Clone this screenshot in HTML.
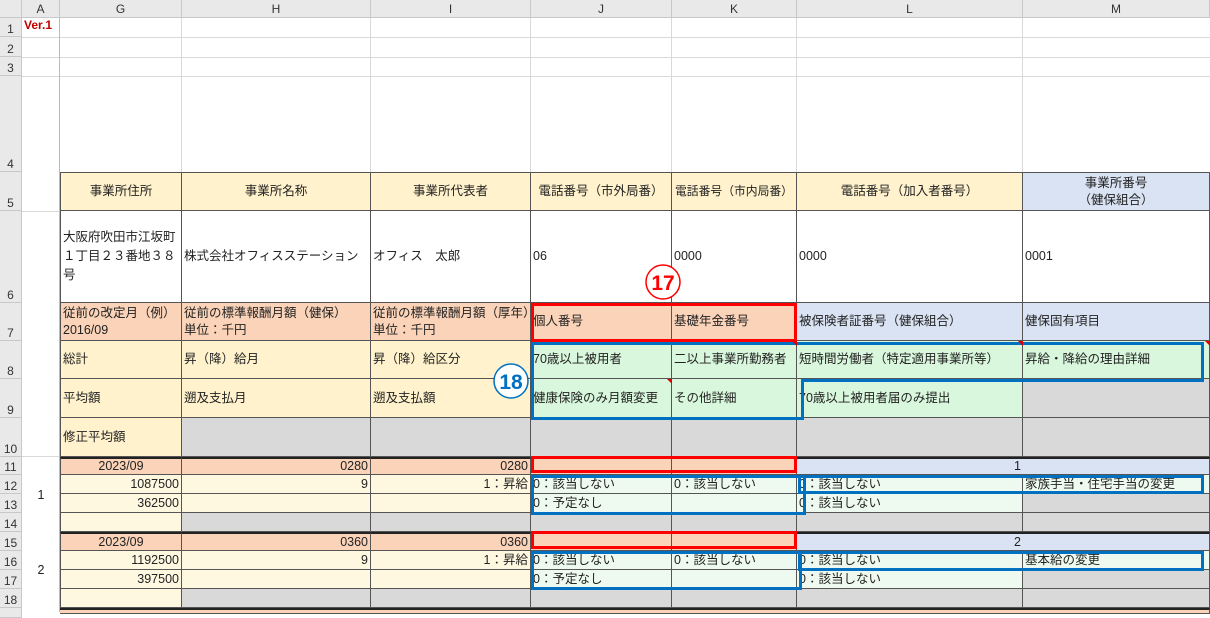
<!DOCTYPE html><html><head><meta charset="utf-8"><style>
body{margin:0;width:1210px;height:612px;overflow:hidden;background:#fff;font-family:"Liberation Sans","Noto Sans CJK JP",sans-serif;font-size:12.5px;color:#222;position:relative}
.c{position:absolute;box-sizing:border-box;border-right:1px solid #555;border-bottom:1px solid #555;display:flex;align-items:center;padding:0 2px;white-space:nowrap;overflow:hidden;line-height:17px}
.h{position:absolute;background:#e9e9e9;box-sizing:border-box;border-right:1px solid #c8c8c8;border-bottom:1px solid #c8c8c8;display:flex;justify-content:center;color:#333;font-size:12px}
.ce{justify-content:center;text-align:center}.r{justify-content:flex-end}
.Y{background:#fff2cc}.O{background:#fad3b8}.B{background:#dae3f3}.G{background:#d8f7dc}.P{background:#fff8e1}.LG{background:#eefaf0}.GR{background:#d9d9d9}.W{background:#fff}
</style></head><body>
<div class="h" style="left:0;top:0;width:22px;height:18px"></div>
<div class="h" style="left:22px;top:0;width:38px;height:18px;align-items:center">A</div>
<div class="h" style="left:60px;top:0;width:122px;height:18px;align-items:center">G</div>
<div class="h" style="left:182px;top:0;width:189px;height:18px;align-items:center">H</div>
<div class="h" style="left:371px;top:0;width:160px;height:18px;align-items:center">I</div>
<div class="h" style="left:531px;top:0;width:141px;height:18px;align-items:center">J</div>
<div class="h" style="left:672px;top:0;width:125px;height:18px;align-items:center">K</div>
<div class="h" style="left:797px;top:0;width:226px;height:18px;align-items:center">L</div>
<div class="h" style="left:1023px;top:0;width:187px;height:18px;align-items:center">M</div>
<div class="h" style="left:0;top:18px;width:22px;height:19px;align-items:flex-end">1</div>
<div class="h" style="left:0;top:37px;width:22px;height:20px;align-items:flex-end">2</div>
<div class="h" style="left:0;top:57px;width:22px;height:19px;align-items:flex-end">3</div>
<div class="h" style="left:0;top:76px;width:22px;height:96px;align-items:flex-end">4</div>
<div class="h" style="left:0;top:172px;width:22px;height:39px;align-items:flex-end">5</div>
<div class="h" style="left:0;top:211px;width:22px;height:92px;align-items:flex-end">6</div>
<div class="h" style="left:0;top:303px;width:22px;height:38px;align-items:flex-end">7</div>
<div class="h" style="left:0;top:341px;width:22px;height:38px;align-items:flex-end">8</div>
<div class="h" style="left:0;top:379px;width:22px;height:39px;align-items:flex-end">9</div>
<div class="h" style="left:0;top:418px;width:22px;height:39px;align-items:flex-end">10</div>
<div class="h" style="left:0;top:457px;width:22px;height:18px;align-items:flex-end">11</div>
<div class="h" style="left:0;top:475px;width:22px;height:19px;align-items:flex-end">12</div>
<div class="h" style="left:0;top:494px;width:22px;height:19px;align-items:flex-end">13</div>
<div class="h" style="left:0;top:513px;width:22px;height:19px;align-items:flex-end">14</div>
<div class="h" style="left:0;top:532px;width:22px;height:19px;align-items:flex-end">15</div>
<div class="h" style="left:0;top:551px;width:22px;height:19px;align-items:flex-end">16</div>
<div class="h" style="left:0;top:570px;width:22px;height:19px;align-items:flex-end">17</div>
<div class="h" style="left:0;top:589px;width:22px;height:19px;align-items:flex-end">18</div>
<div class="h" style="left:0;top:608px;width:22px;height:10px"></div>
<svg style="position:absolute;left:0;top:0" width="1210" height="612">
<g stroke="#d9d9d9" stroke-width="1">
<line x1="22" y1="37.5" x2="1210" y2="37.5"/><line x1="22" y1="57.5" x2="1210" y2="57.5"/><line x1="22" y1="76.5" x2="1210" y2="76.5"/>
<line x1="181.5" y1="18" x2="181.5" y2="172"/><line x1="370.5" y1="18" x2="370.5" y2="172"/><line x1="530.5" y1="18" x2="530.5" y2="172"/><line x1="671.5" y1="18" x2="671.5" y2="172"/><line x1="796.5" y1="18" x2="796.5" y2="172"/><line x1="1022.5" y1="18" x2="1022.5" y2="172"/>
<line x1="22" y1="211.5" x2="60" y2="211.5"/><line x1="22" y1="456.5" x2="60" y2="456.5"/>
</g>
<line x1="59.5" y1="18" x2="59.5" y2="612" stroke="#bbb"/>
</svg>
<div style="position:absolute;left:24px;top:18px;color:#c00000;font-weight:bold;font-size:12px">Ver.1</div>
<div class="c Y ce" style="left:60px;top:172px;width:122px;height:39px;border-top:1px solid #555;border-left:1px solid #555">事業所住所</div>
<div class="c Y ce" style="left:182px;top:172px;width:189px;height:39px;border-top:1px solid #555">事業所名称</div>
<div class="c Y ce" style="left:371px;top:172px;width:160px;height:39px;border-top:1px solid #555">事業所代表者</div>
<div class="c Y ce" style="left:531px;top:172px;width:141px;height:39px;border-top:1px solid #555">電話番号（市外局番）</div>
<div class="c Y ce" style="left:672px;top:172px;width:125px;height:39px;border-top:1px solid #555;font-size:11.8px;padding:0">電話番号（市内局番）</div>
<div class="c Y ce" style="left:797px;top:172px;width:226px;height:39px;border-top:1px solid #555">電話番号（加入者番号）</div>
<div class="c B ce" style="left:1023px;top:172px;width:187px;height:39px;border-top:1px solid #555">事業所番号<br>（健保組合）</div>
<div class="c W" style="left:60px;top:211px;width:122px;height:92px;border-left:1px solid #555;white-space:normal;line-height:19px;word-break:break-all">大阪府吹田市江坂町１丁目２３番地３８号</div>
<div class="c W" style="left:182px;top:211px;width:189px;height:92px">株式会社オフィスステーション</div>
<div class="c W" style="left:371px;top:211px;width:160px;height:92px">オフィス　太郎</div>
<div class="c W" style="left:531px;top:211px;width:141px;height:92px">06</div>
<div class="c W" style="left:672px;top:211px;width:125px;height:92px">0000</div>
<div class="c W" style="left:797px;top:211px;width:226px;height:92px">0000</div>
<div class="c W" style="left:1023px;top:211px;width:187px;height:92px">0001</div>
<div class="c O" style="left:60px;top:303px;width:122px;height:38px;border-left:1px solid #555">従前の改定月（例）<br>2016/09</div>
<div class="c O" style="left:182px;top:303px;width:189px;height:38px">従前の標準報酬月額（健保）<br>単位：千円</div>
<div class="c O" style="left:371px;top:303px;width:160px;height:38px">従前の標準報酬月額（厚年）<br>単位：千円</div>
<div class="c O" style="left:531px;top:303px;width:141px;height:38px">個人番号</div>
<div class="c O" style="left:672px;top:303px;width:125px;height:38px">基礎年金番号</div>
<div class="c B" style="left:797px;top:303px;width:226px;height:38px">被保険者証番号（健保組合）</div>
<div class="c B" style="left:1023px;top:303px;width:187px;height:38px">健保固有項目</div>
<div class="c Y" style="left:60px;top:341px;width:122px;height:38px;border-left:1px solid #555">総計</div>
<div class="c Y" style="left:182px;top:341px;width:189px;height:38px">昇（降）給月</div>
<div class="c Y" style="left:371px;top:341px;width:160px;height:38px">昇（降）給区分</div>
<div class="c G" style="left:531px;top:341px;width:141px;height:38px">70歳以上被用者</div>
<div class="c G" style="left:672px;top:341px;width:125px;height:38px">二以上事業所勤務者</div>
<div class="c G" style="left:797px;top:341px;width:226px;height:38px">短時間労働者（特定適用事業所等）</div>
<div class="c G" style="left:1023px;top:341px;width:187px;height:38px">昇給・降給の理由詳細</div>
<div class="c Y" style="left:60px;top:379px;width:122px;height:39px;border-left:1px solid #555">平均額</div>
<div class="c Y" style="left:182px;top:379px;width:189px;height:39px">遡及支払月</div>
<div class="c Y" style="left:371px;top:379px;width:160px;height:39px">遡及支払額</div>
<div class="c G" style="left:531px;top:379px;width:141px;height:39px">健康保険のみ月額変更</div>
<div class="c G" style="left:672px;top:379px;width:125px;height:39px">その他詳細</div>
<div class="c G" style="left:797px;top:379px;width:226px;height:39px">70歳以上被用者届のみ提出</div>
<div class="c GR" style="left:1023px;top:379px;width:187px;height:39px"></div>
<div class="c Y" style="left:60px;top:418px;width:122px;height:39px;border-left:1px solid #555">修正平均額</div>
<div class="c GR" style="left:182px;top:418px;width:189px;height:39px"></div>
<div class="c GR" style="left:371px;top:418px;width:160px;height:39px"></div>
<div class="c GR" style="left:531px;top:418px;width:141px;height:39px"></div>
<div class="c GR" style="left:672px;top:418px;width:125px;height:39px"></div>
<div class="c GR" style="left:797px;top:418px;width:226px;height:39px"></div>
<div class="c GR" style="left:1023px;top:418px;width:187px;height:39px"></div>
<div style="position:absolute;left:22px;top:457px;width:38px;height:75px;display:flex;align-items:center;justify-content:center">1</div>
<div class="c O ce" style="left:60px;top:457px;width:122px;height:18px;border-left:1px solid #555;border-top:2px solid #222">2023/09</div>
<div class="c O r" style="left:182px;top:457px;width:189px;height:18px;border-top:2px solid #222">0280</div>
<div class="c O r" style="left:371px;top:457px;width:160px;height:18px;border-top:2px solid #222">0280</div>
<div class="c O" style="left:531px;top:457px;width:141px;height:18px;border-top:2px solid #222"></div>
<div class="c O" style="left:672px;top:457px;width:125px;height:18px;border-top:2px solid #222"></div>
<div class="c B r" style="left:797px;top:457px;width:226px;height:18px;border-top:2px solid #222;border-right:none">1</div>
<div class="c B" style="left:1023px;top:457px;width:187px;height:18px;border-top:2px solid #222"></div>
<div class="c P r" style="left:60px;top:475px;width:122px;height:19px;border-left:1px solid #555">1087500</div>
<div class="c P r" style="left:182px;top:475px;width:189px;height:19px">9</div>
<div class="c P r" style="left:371px;top:475px;width:160px;height:19px">1：昇給</div>
<div class="c LG" style="left:531px;top:475px;width:141px;height:19px">0：該当しない</div>
<div class="c LG" style="left:672px;top:475px;width:125px;height:19px">0：該当しない</div>
<div class="c LG" style="left:797px;top:475px;width:226px;height:19px">0：該当しない</div>
<div class="c LG" style="left:1023px;top:475px;width:187px;height:19px">家族手当・住宅手当の変更</div>
<div class="c P r" style="left:60px;top:494px;width:122px;height:19px;border-left:1px solid #555">362500</div>
<div class="c P" style="left:182px;top:494px;width:189px;height:19px"></div>
<div class="c P" style="left:371px;top:494px;width:160px;height:19px"></div>
<div class="c LG" style="left:531px;top:494px;width:141px;height:19px">0：予定なし</div>
<div class="c LG" style="left:672px;top:494px;width:125px;height:19px"></div>
<div class="c LG" style="left:797px;top:494px;width:226px;height:19px">0：該当しない</div>
<div class="c GR" style="left:1023px;top:494px;width:187px;height:19px"></div>
<div class="c P" style="left:60px;top:513px;width:122px;height:19px;border-left:1px solid #555"></div>
<div class="c GR" style="left:182px;top:513px;width:189px;height:19px"></div>
<div class="c GR" style="left:371px;top:513px;width:160px;height:19px"></div>
<div class="c GR" style="left:531px;top:513px;width:141px;height:19px"></div>
<div class="c GR" style="left:672px;top:513px;width:125px;height:19px"></div>
<div class="c GR" style="left:797px;top:513px;width:226px;height:19px"></div>
<div class="c GR" style="left:1023px;top:513px;width:187px;height:19px"></div>
<div style="position:absolute;left:22px;top:532px;width:38px;height:76px;display:flex;align-items:center;justify-content:center">2</div>
<div class="c O ce" style="left:60px;top:532px;width:122px;height:19px;border-left:1px solid #555;border-top:2px solid #222">2023/09</div>
<div class="c O r" style="left:182px;top:532px;width:189px;height:19px;border-top:2px solid #222">0360</div>
<div class="c O r" style="left:371px;top:532px;width:160px;height:19px;border-top:2px solid #222">0360</div>
<div class="c O" style="left:531px;top:532px;width:141px;height:19px;border-top:2px solid #222"></div>
<div class="c O" style="left:672px;top:532px;width:125px;height:19px;border-top:2px solid #222"></div>
<div class="c B r" style="left:797px;top:532px;width:226px;height:19px;border-top:2px solid #222;border-right:none">2</div>
<div class="c B" style="left:1023px;top:532px;width:187px;height:19px;border-top:2px solid #222"></div>
<div class="c P r" style="left:60px;top:551px;width:122px;height:19px;border-left:1px solid #555">1192500</div>
<div class="c P r" style="left:182px;top:551px;width:189px;height:19px">9</div>
<div class="c P r" style="left:371px;top:551px;width:160px;height:19px">1：昇給</div>
<div class="c LG" style="left:531px;top:551px;width:141px;height:19px">0：該当しない</div>
<div class="c LG" style="left:672px;top:551px;width:125px;height:19px">0：該当しない</div>
<div class="c LG" style="left:797px;top:551px;width:226px;height:19px">0：該当しない</div>
<div class="c LG" style="left:1023px;top:551px;width:187px;height:19px">基本給の変更</div>
<div class="c P r" style="left:60px;top:570px;width:122px;height:19px;border-left:1px solid #555">397500</div>
<div class="c P" style="left:182px;top:570px;width:189px;height:19px"></div>
<div class="c P" style="left:371px;top:570px;width:160px;height:19px"></div>
<div class="c LG" style="left:531px;top:570px;width:141px;height:19px">0：予定なし</div>
<div class="c LG" style="left:672px;top:570px;width:125px;height:19px"></div>
<div class="c LG" style="left:797px;top:570px;width:226px;height:19px">0：該当しない</div>
<div class="c GR" style="left:1023px;top:570px;width:187px;height:19px"></div>
<div class="c P" style="left:60px;top:589px;width:122px;height:19px;border-left:1px solid #555"></div>
<div class="c GR" style="left:182px;top:589px;width:189px;height:19px"></div>
<div class="c GR" style="left:371px;top:589px;width:160px;height:19px"></div>
<div class="c GR" style="left:531px;top:589px;width:141px;height:19px"></div>
<div class="c GR" style="left:672px;top:589px;width:125px;height:19px"></div>
<div class="c GR" style="left:797px;top:589px;width:226px;height:19px"></div>
<div class="c GR" style="left:1023px;top:589px;width:187px;height:19px"></div>
<div class="c O" style="left:60px;top:608px;width:1150px;height:6px;border-top:2px solid #222"></div>
<svg style="position:absolute;left:0;top:0" width="1210" height="612">
<g fill="none" stroke="#ff0000" stroke-width="3">
<rect x="532.5" y="304.5" width="263" height="36"/>
<rect x="532.5" y="457.5" width="263" height="14"/>
<rect x="532.5" y="532.5" width="263" height="15"/>
</g>
<g fill="none" stroke="#0070c0" stroke-width="3">
<polygon points="532.5,343.5 1202.5,343.5 1202.5,380.5 802.5,380.5 802.5,418.5 532.5,418.5"/>
<rect x="532.5" y="476.5" width="272" height="37"/>
<rect x="799.5" y="476.5" width="403" height="16"/>
<rect x="532.5" y="552.5" width="268" height="36"/>
<rect x="799.5" y="552.5" width="403" height="17"/>
</g>
<circle cx="663" cy="282" r="17" fill="#fff" stroke="#ff0000" stroke-width="1.5"/>
<text x="663" y="290" text-anchor="middle" font-family="Liberation Sans" font-weight="bold" font-size="21" fill="#ff0000">17</text>
<circle cx="511" cy="381" r="17" fill="#fff" stroke="#0070c0" stroke-width="1.5"/>
<text x="511" y="389" text-anchor="middle" font-family="Liberation Sans" font-weight="bold" font-size="21" fill="#0070c0">18</text>
<g fill="#e00000"><polygon points="792,341 797,341 797,346"/><polygon points="1018,341 1023,341 1023,346"/><polygon points="667,379 672,379 672,384"/><polygon points="1205,341 1210,341 1210,346"/></g>
</svg>
</body></html>
